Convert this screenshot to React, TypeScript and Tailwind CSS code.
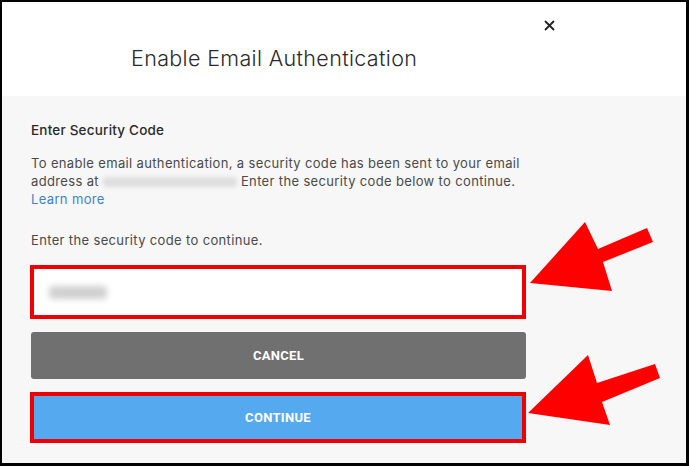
import React from 'react';

const Arrow: React.FC<{ points: string }> = ({ points }) => (
  <polygon points={points} fill="#ff0000" />
);

export default function App() {
  return (
    <div className="relative w-[689px] h-[466px] bg-black overflow-hidden" style={{ fontFamily: 'Inter, "Noto Sans", sans-serif' }}>
      <div className="absolute left-[2px] top-[2px] right-[3px] bottom-[3px] flex flex-col bg-[#f7f7f7]">
        {/* header */}
        <div className="relative h-[94px] bg-white shrink-0">
          <h1 className="absolute left-[129px] top-[43px] text-[21.5px] leading-[26px] font-light tracking-[0.35px] text-[#2a2a2a]">
            Enable Email Authentication
          </h1>
          <button className="absolute left-[539px] top-[15px] w-[16px] h-[16px] flex items-center justify-center text-[#222]">
            <svg width="11" height="11" viewBox="0 0 11 11" fill="none" stroke="currentColor" strokeWidth="1.8">
              <path d="M1 1 L10 10 M10 1 L1 10" />
            </svg>
          </button>
        </div>

        {/* body */}
        <div className="flex flex-col pl-[29px] pt-[25px] text-[13px] leading-[18px] tracking-[0.35px] text-[#4a4a4a]">
          <div className="font-medium text-[13.5px] tracking-[0.2px] text-[#2a2a2a]">Enter Security Code</div>
          <p className="mt-[15px] w-[520px]">
            To enable email authentication, a security code has been sent to your email
            <br />
            address at{' '}
            <span className="inline-block align-middle w-[134px] h-[10px] bg-[#dedede] blur-[2px] rounded-sm" />{' '}
            Enter the security code below to continue.
            <br />
            <span className="text-[#3d84c8]">Learn more</span>
          </p>
          <div className="mt-[23px]">Enter the security code to continue.</div>

          <div className="-ml-[1px] mt-[16px] w-[496px] flex flex-col">
            <div className="h-[54px] border-[4px] border-[#ee0000] bg-white flex items-center pl-[15px]">
              <span className="inline-block w-[58px] h-[13px] bg-[#d0d0d0] blur-[3px] rounded-sm" />
            </div>
            <button className="mt-[13px] ml-[1px] h-[47px] rounded-[3px] bg-[#707070] text-white font-bold text-[13px] tracking-[0.3px]" style={{ fontFamily: 'Roboto, sans-serif' }}>
              CANCEL
            </button>
            <div className="mt-[13px] h-[51px] border-[4px] border-[#ee0000] bg-[#55aaef] flex items-center justify-center text-white font-bold text-[13px] tracking-[0.3px]" style={{ fontFamily: 'Roboto, sans-serif' }}>
              CONTINUE
            </div>
          </div>
        </div>
      </div>

      <svg className="absolute left-0 top-0" width="689" height="466" viewBox="0 0 689 466">
        <Arrow points="530,283 585,222 598,249 647,228 653,242 603,262 612,291" />
        <Arrow points="528,413 588,355 597,383 655,364 660,378 602,402 610,425" />
      </svg>
    </div>
  );
}
